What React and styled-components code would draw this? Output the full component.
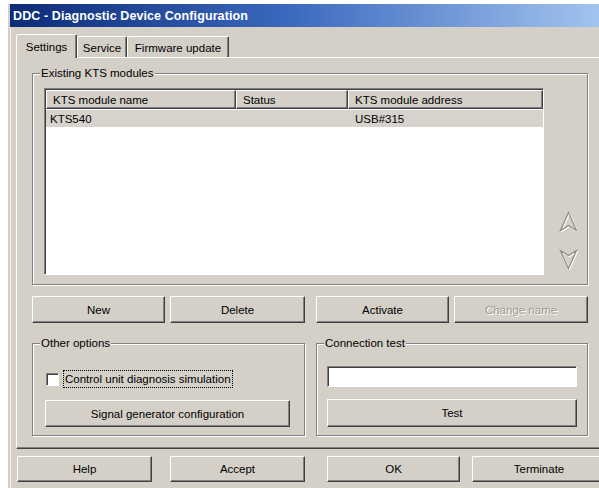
import React from "react";
import styled, { createGlobalStyle, css } from "styled-components";

const FACE = "#d4d0c8";

const Global = createGlobalStyle`
  html, body {
    margin: 0;
    padding: 0;
    background: #ffffff;
    overflow: hidden;
    width: 599px;
    height: 488px;
  }
  body {
    font-family: "Liberation Sans", Arial, sans-serif;
    font-size: 11.5px;
    color: #000;
  }
`;

const raised = css`
  border: 1px solid;
  border-color: #ffffff #404040 #404040 #ffffff;
  box-shadow: inset -1px -1px 0 #808080;
`;

const sunken = css`
  border: 1px solid;
  border-color: #808080 #ffffff #ffffff #808080;
  box-shadow: inset 1px 1px 0 #404040;
`;

const Window = styled.div`
  margin: 4px 0 0 8px;
  width: 612px;
  background: ${FACE};
  border-left: 2px solid ${FACE};
  box-shadow: inset 1px 0 0 #f4f2ee;
  padding-bottom: 6px;
`;

const TitleBar = styled.div`
  height: 23px;
  display: flex;
  align-items: center;
  justify-content: space-between;
  background: linear-gradient(90deg, #0c2b78 0%, #3b68bd 45%, #a8cbf2 100%);
  padding: 0 5px 0 3px;
`;

const Title = styled.span`
  color: #fff;
  font-weight: bold;
  font-size: 12.5px;
  letter-spacing: 0.1px;
`;

const CloseButton = styled.div`
  ${raised};
  width: 14px;
  height: 12px;
  background: ${FACE};
  display: flex;
  align-items: center;
  justify-content: center;
  font-weight: bold;
  font-size: 11px;
  line-height: 1;
`;

const Body = styled.div`
  padding: 6px 0 0 6px;
`;

const TabRow = styled.div`
  display: flex;
  align-items: flex-end;
  height: 24px;
  position: relative;
  z-index: 1;
`;

const Tab = styled.div`
  background: ${FACE};
  border: 1px solid;
  border-bottom: none;
  border-color: #ffffff #404040 transparent #ffffff;
  box-shadow: inset -1px 0 0 #808080;
  border-radius: 2px 2px 0 0;
  width: ${(p) => p.$w}px;
  height: ${(p) => (p.$active ? 24 : 21)}px;
  margin-bottom: ${(p) => (p.$active ? -1 : 0)}px;
  box-sizing: border-box;
  display: flex;
  align-items: center;
  justify-content: center;
  padding-top: ${(p) => (p.$active ? 0 : 1)}px;
`;

const Pane = styled.div`
  width: 588px;
  box-sizing: border-box;
  border: 1px solid;
  border-color: #ffffff #404040 #404040 #ffffff;
  box-shadow: inset -1px -1px 0 #808080;
  padding: 15px 15px 12px 15px;
`;

const Group = styled.div`
  position: relative;
  border: 1px solid #808080;
  box-shadow: 1px 1px 0 #ffffff, inset 1px 1px 0 #ffffff;
  height: ${(p) => p.$h}px;
  box-sizing: border-box;
  padding: ${(p) => p.$pad};
`;

const Legend = styled.span`
  position: absolute;
  top: -8px;
  left: 7px;
  background: ${FACE};
  padding: 0 1px;
  line-height: 14px;
`;

const ListArea = styled.div`
  display: flex;
  height: 100%;
`;

const ListView = styled.div`
  ${sunken};
  background: #ffffff;
  width: 500px;
  height: 187px;
  box-sizing: border-box;
  padding: 1px 0 0 1px;
`;

const HeaderRow = styled.div`
  display: grid;
  grid-template-columns: 190px 112px 195px;
`;

const HeaderCell = styled.div`
  ${raised};
  background: ${FACE};
  height: 19px;
  box-sizing: border-box;
  padding-left: 6px;
  display: flex;
  align-items: center;
`;

const Row = styled.div`
  display: grid;
  grid-template-columns: 190px 112px 195px;
  height: 17px;
  align-items: center;
  background: ${(p) => (p.$selected ? "#d6d3cd" : "transparent")};
  margin-top: 1px;
`;

const Cell = styled.div`
  padding-left: ${(p) => p.$pad}px;
`;

const Arrows = styled.div`
  flex: 1;
  display: flex;
  flex-direction: column;
  align-items: center;
  justify-content: flex-end;
  gap: 17px;
  padding: 0 0 6px 5px;
`;

const TwoCols = styled.div`
  display: grid;
  grid-template-columns: 273px 272px;
  column-gap: 11px;
  margin-top: ${(p) => p.$mt}px;
`;

const Pair = styled.div`
  display: grid;
  grid-template-columns: 133px 1fr;
  column-gap: 5px;
`;

const Button = styled.div`
  ${raised};
  background: ${FACE};
  height: ${(p) => p.$h || 27}px;
  box-sizing: border-box;
  display: flex;
  align-items: center;
  justify-content: center;
  color: ${(p) => (p.$disabled ? "#9d9991" : "#000")};
  text-shadow: ${(p) => (p.$disabled ? "1px 1px 0 #ffffff" : "none")};
  margin-top: ${(p) => p.$mt || 0}px;
`;

const CheckRow = styled.div`
  display: flex;
  align-items: center;
  gap: 5px;
  padding-left: 1px;
`;

const CheckBox = styled.div`
  ${sunken};
  width: 13px;
  height: 13px;
  box-sizing: border-box;
  background: #ffffff;
`;

const CheckLabel = styled.span`
  outline: 1px dotted #000;
  outline-offset: 0;
  padding: 1px 1px;
  line-height: 14px;
`;

const TextInput = styled.div`
  ${sunken};
  background: #ffffff;
  height: 21px;
  box-sizing: border-box;
`;

const Footer = styled.div`
  display: flex;
  margin-top: 7px;
  margin-left: 1px;
`;

const FooterButton = styled(Button)`
  width: ${(p) => p.$w}px;
  margin-left: ${(p) => p.$ml}px;
`;

function Arrow({ down }) {
  const pts = down ? "9,19 17,1 9,6 1,1" : "9,1 17,19 9,14 1,19";
  return (
    <svg width="19" height="21" viewBox="-0.5 -0.5 19 21">
      <polygon points={pts} fill="none" stroke="#ffffff" strokeWidth="1.2" transform="translate(1,1)" />
      <polygon points={pts} fill="none" stroke="#8f8c86" strokeWidth="1.2" />
    </svg>
  );
}

export default function App() {
  return (
    <>
      <Global />
      <Window>
        <TitleBar>
          <Title>DDC - Diagnostic Device Configuration</Title>
          <CloseButton>X</CloseButton>
        </TitleBar>
        <Body>
          <TabRow>
            <Tab $active $w={61}>Settings</Tab>
            <Tab $w={50}>Service</Tab>
            <Tab $w={102}>Firmware update</Tab>
          </TabRow>
          <Pane>
            <Group $h={212} $pad="14px 0 8px 11px">
              <Legend>Existing KTS modules</Legend>
              <ListArea>
                <ListView>
                  <HeaderRow>
                    <HeaderCell>KTS module name</HeaderCell>
                    <HeaderCell>Status</HeaderCell>
                    <HeaderCell>KTS module address</HeaderCell>
                  </HeaderRow>
                  <Row $selected>
                    <Cell $pad={4}>KTS540</Cell>
                    <Cell $pad={6}></Cell>
                    <Cell $pad={7}>USB#315</Cell>
                  </Row>
                </ListView>
                <Arrows>
                  <Arrow />
                  <Arrow down />
                </Arrows>
              </ListArea>
            </Group>

            <TwoCols $mt={11}>
              <Pair>
                <Button>New</Button>
                <Button>Delete</Button>
              </Pair>
              <Pair>
                <Button>Activate</Button>
                <Button $disabled>Change name</Button>
              </Pair>
            </TwoCols>

            <TwoCols $mt={20}>
              <Group $h={93} $pad="27px 14px 0 12px">
                <Legend>Other options</Legend>
                <CheckRow>
                  <CheckBox />
                  <CheckLabel>Control unit diagnosis simulation</CheckLabel>
                </CheckRow>
                <Button $mt={13}>Signal generator configuration</Button>
              </Group>
              <Group $h={93} $pad="22px 10px 0 10px">
                <Legend>Connection test</Legend>
                <TextInput />
                <Button $mt={12} $h={28}>Test</Button>
              </Group>
            </TwoCols>
          </Pane>
          <Footer>
            <FooterButton $w={135} $h={26}>Help</FooterButton>
            <FooterButton $w={135} $h={26} $ml={18}>Accept</FooterButton>
            <FooterButton $w={133} $h={26} $ml={22}>OK</FooterButton>
            <FooterButton $w={134} $h={26} $ml={12}>Terminate</FooterButton>
          </Footer>
        </Body>
      </Window>
    </>
  );
}
